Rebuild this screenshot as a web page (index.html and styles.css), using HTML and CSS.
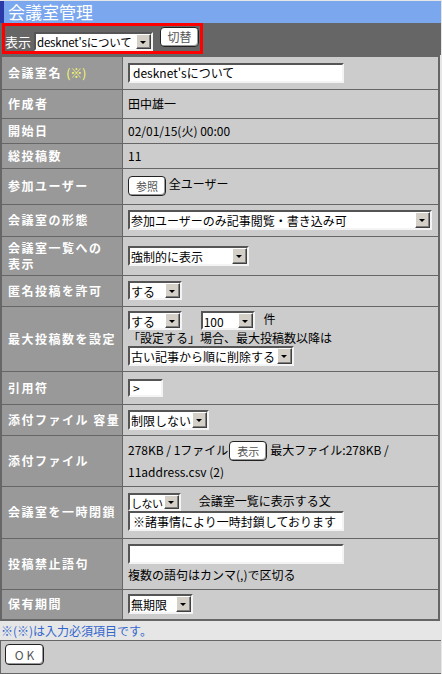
FILE: index.html
```
<!DOCTYPE html>
<html lang="ja">
<head>
    <meta charset="UTF-8" />
    <meta name="viewport" content="width=device-width, initial-scale=1" />
    <title>会議室管理</title>
    <link rel="stylesheet" href="styles.css">
</head>
<body>

    <div class="titlebar">会議室管理</div>

    <div class="toolbar">
        <form class="switcher">
            <label for="roomSelect">表示</label>
            <span class="sel w-head">
                <select id="roomSelect"><option>desknet'sについて</option></select>
            </span>
            <button type="button" class="btn btn-switch">切替</button>
        </form>
    </div>

    <table class="settings">
        <tr class="h33">
            <th>会議室名 <span class="req">(※)</span></th>
            <td><input type="text" class="txt w-long" value="desknet'sについて" /></td>
        </tr>
        <tr class="h29">
            <th>作成者</th>
            <td>田中雄一</td>
        </tr>
        <tr class="h25">
            <th>開始日</th>
            <td>02/01/15(火) 00:00</td>
        </tr>
        <tr class="h25">
            <th>総投稿数</th>
            <td>11</td>
        </tr>
        <tr class="h36">
            <th>参加ユーザー</th>
            <td><button type="button" class="btn btn-small">参照</button> 全ユーザー</td>
        </tr>
        <tr class="h32">
            <th>会議室の形態</th>
            <td>
                <span class="sel w-form">
                    <select><option>参加ユーザーのみ記事閲覧・書き込み可</option></select>
                </span>
            </td>
        </tr>
        <tr class="h39">
            <th>会議室一覧への<br>表示</th>
            <td>
                <span class="sel w-list">
                    <select><option>強制的に表示</option></select>
                </span>
            </td>
        </tr>
        <tr class="h31">
            <th>匿名投稿を許可</th>
            <td>
                <span class="sel w-yn">
                    <select><option>する</option></select>
                </span>
            </td>
        </tr>
        <tr class="h65">
            <th>最大投稿数を設定</th>
            <td>
                <div class="line">
                    <span class="sel w-yn">
                        <select><option>する</option></select>
                    </span>
                    <span class="sel w-num">
                        <select><option>100</option></select>
                    </span>
                    <span class="unit">件</span>
                </div>
                <div class="line">「設定する」場合、最大投稿数以降は</div>
                <div class="line">
                    <span class="sel w-del">
                        <select><option>古い記事から順に削除する</option></select>
                    </span>
                </div>
            </td>
        </tr>
        <tr class="h33">
            <th>引用符</th>
            <td><input type="text" class="txt w-quote" value="&gt;" /></td>
        </tr>
        <tr class="h31">
            <th>添付ファイル 容量</th>
            <td>
                <span class="sel w-size">
                    <select><option>制限しない</option></select>
                </span>
            </td>
        </tr>
        <tr class="h51">
            <th>添付ファイル</th>
            <td class="files">
                <span>278KB / 1ファイル</span><button type="button" class="btn btn-small">表示</button><span>最大ファイル:278KB /</span><br>
                <span>11address.csv (2)</span>
            </td>
        </tr>
        <tr class="h52">
            <th>会議室を一時閉鎖</th>
            <td>
                <div class="line">
                    <span class="sel w-close">
                        <select><option>しない</option></select>
                    </span>
                    <span class="hint">会議室一覧に表示する文</span>
                </div>
                <div class="line">
                    <input type="text" class="txt w-long" value="※諸事情により一時封鎖しております" />
                </div>
            </td>
        </tr>
        <tr class="h51">
            <th>投稿禁止語句</th>
            <td>
                <div class="line"><input type="text" class="txt w-long" value="" /></div>
                <div class="line gap">複数の語句はカンマ(,)で区切る</div>
            </td>
        </tr>
        <tr class="h31">
            <th>保有期間</th>
            <td>
                <span class="sel w-keep">
                    <select><option>無期限</option></select>
                </span>
            </td>
        </tr>
    </table>

    <p class="note">※(※)は入力必須項目です。</p>

    <div class="actions">
        <button type="button" class="btn btn-ok">OK</button>
    </div>

</body>
</html>
```

FILE: styles.css
```
body {
    font-family: "Noto Sans CJK JP", "Liberation Sans", sans-serif;
    font-size: 12px;
    background-color: #e6e6e6;
    margin: 0;
    padding: 1px 0 0 0;
    color: #000;
    width: 441px;
}

.titlebar {
    background-color: #7ba7ee;
    border-left: 4px solid #2b3aa6;
    color: #fff;
    font-size: 17px;
    height: 22px;
    line-height: 22px;
    padding-left: 4px;
}

.toolbar {
    background-color: #666;
    height: 32px;
    padding-left: 2px;
}

.switcher {
    display: flex;
    align-items: flex-end;
    width: 195px;
    height: 25px;
    margin: 0;
    border: 3px solid #f00;
}

.switcher label {
    color: #fff;
    font-size: 13px;
    line-height: 18px;
    margin-right: 3px;
}

.btn-switch {
    align-self: flex-start;
    margin-top: 1px;
    margin-left: 7px;
}

/* ボタン */
.btn {
    font-family: inherit;
    font-size: 12px;
    color: #555;
    background-color: #fff;
    border: 1px solid #222;
    border-radius: 4px;
    box-shadow: inset -1px -1px 0 #999;
    width: 39px;
    height: 20px;
    padding: 0;
    line-height: 16px;
    cursor: pointer;
}

.btn-small {
    font-size: 11px;
    width: 38px;
    height: 20px;
    vertical-align: middle;
}

.btn-ok {
    letter-spacing: 3px;
    padding-left: 3px;
    width: 39px;
    height: 21px;
}

/* セレクト */
.sel {
    position: relative;
    display: inline-block;
    vertical-align: middle;
    height: 20px;
}

.sel select {
    -webkit-appearance: none;
    appearance: none;
    box-sizing: border-box;
    width: 100%;
    height: 100%;
    margin: 0;
    padding: 0 16px 0 1px;
    font-family: inherit;
    font-size: 12px;
    color: #000;
    background-color: #fff;
    border: 2px solid;
    border-color: #555 #f4f4f4 #f4f4f4 #555;
    border-radius: 0;
    outline: none;
}

.sel::before {
    content: "";
    position: absolute;
    right: 2px;
    top: 2px;
    bottom: 2px;
    width: 15px;
    box-sizing: border-box;
    background-color: #d4d0c8;
    border: 1px solid;
    border-color: #fff #404040 #404040 #fff;
    box-shadow: inset -1px -1px 0 #808080;
    pointer-events: none;
}

.sel::after {
    content: "";
    position: absolute;
    right: 7px;
    top: 50%;
    margin-top: -1px;
    border-left: 3px solid transparent;
    border-right: 3px solid transparent;
    border-top: 3px solid #000;
    pointer-events: none;
}

.w-head { width: 119px; height: 19px; }
.w-head select { font-size: 11.5px; letter-spacing: -0.2px; }
.w-form { width: 304px; }
.w-list { width: 121px; }
.w-yn { width: 54px; height: 19px; }
.w-num { width: 54px; height: 19px; margin-left: 16px; }
.w-del { width: 166px; }
.w-size { width: 81px; }
.w-close { width: 53px; height: 18px; }
.w-close select { font-size: 11px; letter-spacing: -0.5px; }
.w-keep { width: 65px; }

/* テキスト入力 */
.txt {
    box-sizing: border-box;
    height: 20px;
    margin: 0;
    padding: 0 3px;
    font-family: inherit;
    font-size: 12px;
    color: #000;
    background-color: #fff;
    border: 2px solid;
    border-color: #555 #f4f4f4 #f4f4f4 #555;
    outline: none;
    vertical-align: middle;
}

.w-long { width: 216px; }
.w-quote { width: 35px; height: 18px; }

/* 設定テーブル */
.settings {
    border-collapse: collapse;
    width: 440px;
    border: 2px solid #666;
}

.settings th,
.settings td {
    border: 1px solid #666;
    vertical-align: middle;
}

.settings th {
    width: 114px;
    padding: 0 0 0 6px;
    background-color: #999;
    color: #fff;
    font-size: 12px;
    font-weight: bold;
    letter-spacing: 1.5px;
    text-align: left;
    line-height: 16px;
    white-space: nowrap;
}

.settings td {
    background-color: #ccc;
    padding: 0 4px 0 5px;
    line-height: 16px;
}

.req {
    color: #ffff66;
    font-weight: normal;
    letter-spacing: 0;
}

.line {
    line-height: 16px;
}

.gap {
    margin-top: 3px;
}

.unit {
    margin-left: 6px;
}

.hint {
    margin-left: 15px;
}

.settings .files {
    line-height: 21px;
}

.files .btn {
    margin: 0 3px 0 1px;
}

.h25 { height: 25px; }
.h29 { height: 29px; }
.h31 { height: 31px; }
.h32 { height: 32px; }
.h33 { height: 33px; }
.h36 { height: 36px; }
.h39 { height: 39px; }
.h51 { height: 51px; }
.h52 { height: 52px; }
.h65 { height: 65px; }

.note {
    color: #3366cc;
    margin: 0;
    padding: 1px 0 0 1px;
    height: 18px;
    line-height: 17px;
}

.actions {
    background-color: #ccc;
    border: 1px solid #666;
    width: 432px;
    height: 26px;
    padding: 3px 4px;
}
```
